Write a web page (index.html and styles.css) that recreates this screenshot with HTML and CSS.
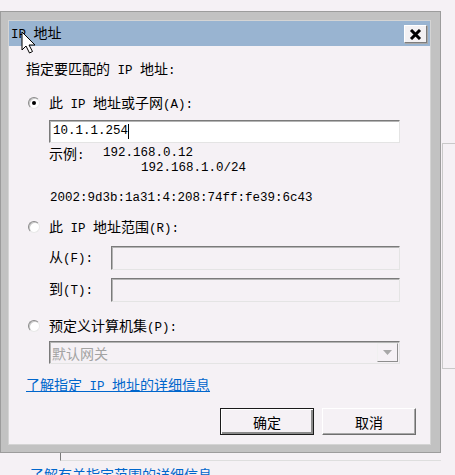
FILE: index.html
```html
<!DOCTYPE html>
<html lang="zh-CN">
<head>
  <meta charset="UTF-8" />
  <title>IP 地址</title>
  <link rel="stylesheet" href="styles.css">
</head>
<body>
  <div class="screen">
    <div class="row">
      <div class="dialog">
        <div class="titlebar">
          <span class="title"><span class="en">IP </span>地址</span>
          <span class="close-btn">
            <svg width="13" height="11" viewBox="0 0 13 11"><path d="M2 1 L11 10 M11 1 L2 10" stroke="#000" stroke-width="3" fill="none"/></svg>
          </span>
        </div>
        <div class="content">
          <div class="heading">指定要匹配的<span class="en"> IP </span>地址<span class="en">:</span></div>

          <div class="radio-row first"><span class="radio checked"></span><span class="label">此<span class="en"> IP </span>地址或子网<span class="en">(A):</span></span></div>
          <div class="indent">
            <div class="textbox">10.1.1.254<span class="caret"></span></div>
            <div class="example"><span class="ex-label">示例<span class="en">:</span></span><span class="en">192.168.0.12</span></div>
            <div class="example second"><span class="en">192.168.1.0/24</span></div>
            <div class="example ipv6"><span class="en">2002:9d3b:1a31:4:208:74ff:fe39:6c43</span></div>
          </div>

          <div class="radio-row"><span class="radio"></span><span class="label">此<span class="en"> IP </span>地址范围<span class="en">(R):</span></span></div>
          <div class="indent">
            <div class="range-row"><span class="range-label">从<span class="en">(F):</span></span><div class="textbox disabled"></div></div>
            <div class="range-row to"><span class="range-label">到<span class="en">(T):</span></span><div class="textbox disabled"></div></div>
          </div>

          <div class="radio-row third"><span class="radio"></span><span class="label">预定义计算机集<span class="en">(P):</span></span></div>
          <div class="indent">
            <div class="combo">
              <span class="combo-text">默认网关</span>
              <span class="combo-arrow"><svg width="9" height="5" viewBox="0 0 9 5"><path d="M0 0 H9 L4.5 5 Z" fill="#a8a8a8"/></svg></span>
            </div>
          </div>

          <div class="link-row"><a class="link" href="#">了解指定<span class="en"> IP </span>地址的详细信息</a></div>

          <div class="buttons">
            <span class="btn default">确定</span>
            <span class="btn">取消</span>
          </div>
        </div>
      </div>
      <div class="side"></div>
    </div>
    <div class="below"></div>
    <div class="bg-link">了解有关指定范围的详细信息</div>
  </div>

  <svg class="cursor" width="17" height="23" viewBox="0 0 17 23">
    <path d="M1 1 L1 19 L5 15 L8.5 22 L11.5 20.5 L8 14 L14 14 Z" fill="#fff" stroke="#000" stroke-width="1"/>
  </svg>
</body>
</html>
```

FILE: styles.css
```css
* {
  margin: 0;
  padding: 0;
  box-sizing: border-box;
}

body {
  width: 455px;
  height: 475px;
  overflow: hidden;
  background: #f5f1f5;
  font-family: "Noto Sans CJK SC", sans-serif;
  font-size: 14px;
  color: #000;
  position: relative;
}

.en {
  font-family: "Liberation Mono", monospace;
  font-size: 12.5px;
}

.screen {
  padding-top: 11px;
}

.row {
  display: flex;
  align-items: flex-start;
}

.dialog {
  width: 441px;
  height: 442px;
  background: #c2c2c2;
  border: 1px solid #9c9c9c;
  padding: 8px 9px 7px 7px;
  display: flex;
  flex-direction: column;
}

.titlebar {
  height: 26px;
  background: #99b4d1;
  display: flex;
  align-items: center;
  justify-content: space-between;
  padding: 0 3px 0 2px;
  border: 1px solid #d4d4d4;
  border-bottom: none;
}

.title {
  line-height: 26px;
}

.close-btn {
  width: 23px;
  height: 18px;
  margin-top: 1px;
  background: #f3f1f3;
  border: 1px solid;
  border-color: #ffffff #7d7d7d #7d7d7d #ffffff;
  box-shadow: 1px 1px 0 #a9a9a9;
  display: flex;
  align-items: center;
  justify-content: center;
}

.content {
  flex: 1;
  background: #f5f1f5;
  padding: 13px 14px 0 17px;
  border: 1px solid #d4d4d4;
  border-top: none;
}

.heading {
  height: 18px;
  line-height: 18px;
}

.radio-row {
  height: 18px;
  line-height: 18px;
  margin-top: 12px;
  display: flex;
  align-items: center;
}

.radio-row.first {
  margin-top: 17px;
}

.radio-row.third {
  margin-top: 14px;
}

.radio {
  width: 12px;
  height: 12px;
  margin: 0 9px 0 2px;
  border-radius: 50%;
  background: #fff;
  border: 1px solid;
  border-color: #8a8a8a #e8e8e8 #e8e8e8 #8a8a8a;
  box-shadow: inset 1px 1px 0 #c8c8c8;
  display: flex;
  align-items: center;
  justify-content: center;
}

.radio.checked::after {
  content: "";
  width: 4px;
  height: 4px;
  border-radius: 50%;
  background: #000;
}

.indent {
  margin-left: 23px;
  width: 351px;
}

.textbox {
  height: 23px;
  margin-top: 8px;
  background: #fff;
  border: 1px solid;
  border-color: #7a7a7a #e4e4e4 #e4e4e4 #7a7a7a;
  box-shadow: inset 1px 1px 0 #b4b4b4;
  padding-left: 3px;
  font-family: "Liberation Mono", monospace;
  font-size: 12.5px;
  line-height: 21px;
  display: flex;
  align-items: center;
}

.caret {
  width: 1px;
  height: 15px;
  background: #000;
}

.textbox.disabled {
  background: #f5f1f5;
  flex: 1;
  margin-top: 0;
  height: 24px;
}

.example {
  height: 16px;
  line-height: 16px;
  margin-top: 2px;
  display: flex;
}

.ex-label {
  width: 54px;
}

.example.second {
  height: 15px;
  line-height: 15px;
  margin-top: 0;
  padding-left: 92px;
}

.example.ipv6 {
  margin-top: 14px;
  padding-left: 1px;
}

.range-row {
  display: flex;
  align-items: center;
  margin-top: 8px;
}

.range-row.to {
  margin-top: 5px;
}

.range-label {
  width: 62px;
  line-height: 24px;
}

.combo {
  height: 23px;
  margin-top: 6px;
  background: #f5f1f5;
  border: 1px solid;
  border-color: #7a7a7a #e4e4e4 #e4e4e4 #7a7a7a;
  box-shadow: inset 1px 1px 0 #b4b4b4;
  display: flex;
  align-items: center;
  justify-content: space-between;
  padding: 1px 1px 1px 2px;
}

.combo-text {
  color: #a3a3a3;
  line-height: 20px;
}

.combo-arrow {
  width: 21px;
  height: 19px;
  background: #f5f1f5;
  border: 1px solid;
  border-color: #f0f0f0 #8e8e8e #8e8e8e #f0f0f0;
  display: flex;
  align-items: center;
  justify-content: center;
}

.link-row {
  margin-top: 12px;
  height: 16px;
  line-height: 16px;
}

.link {
  color: #0066cc;
  text-decoration: underline;
}

.buttons {
  display: flex;
  justify-content: flex-end;
  gap: 8px;
  margin-top: 16px;
}

.btn {
  width: 94px;
  height: 27px;
  background: #f5f1f5;
  border: 1px solid;
  border-color: #ffffff #6f6f6f #6f6f6f #ffffff;
  box-shadow: inset -1px -1px 0 #a8a8a8;
  display: flex;
  align-items: center;
  justify-content: center;
}

.btn.default {
  border: 1px solid #1a1a1a;
  box-shadow: inset 1px 1px 0 #ffffff, inset -2px -2px 0 #8a8a8a;
}

.side {
  flex: 1;
  margin-top: 132px;
  margin-left: 1px;
  height: 226px;
  border-top: 1px solid #c9c9c9;
  border-left: 1px solid #c9c9c9;
  border-bottom: 1px solid #c9c9c9;
}

.below {
  margin-left: 60px;
  width: 381px;
  height: 8px;
  border-left: 1px solid #7a7a7a;
  border-bottom: 1px solid #dedede;
}

.bg-link {
  margin: 5px 0 0 30px;
  color: #0066cc;
  text-decoration: underline;
  line-height: 16px;
}

.cursor {
  position: absolute;
  left: 21px;
  top: 31px;
}
```
